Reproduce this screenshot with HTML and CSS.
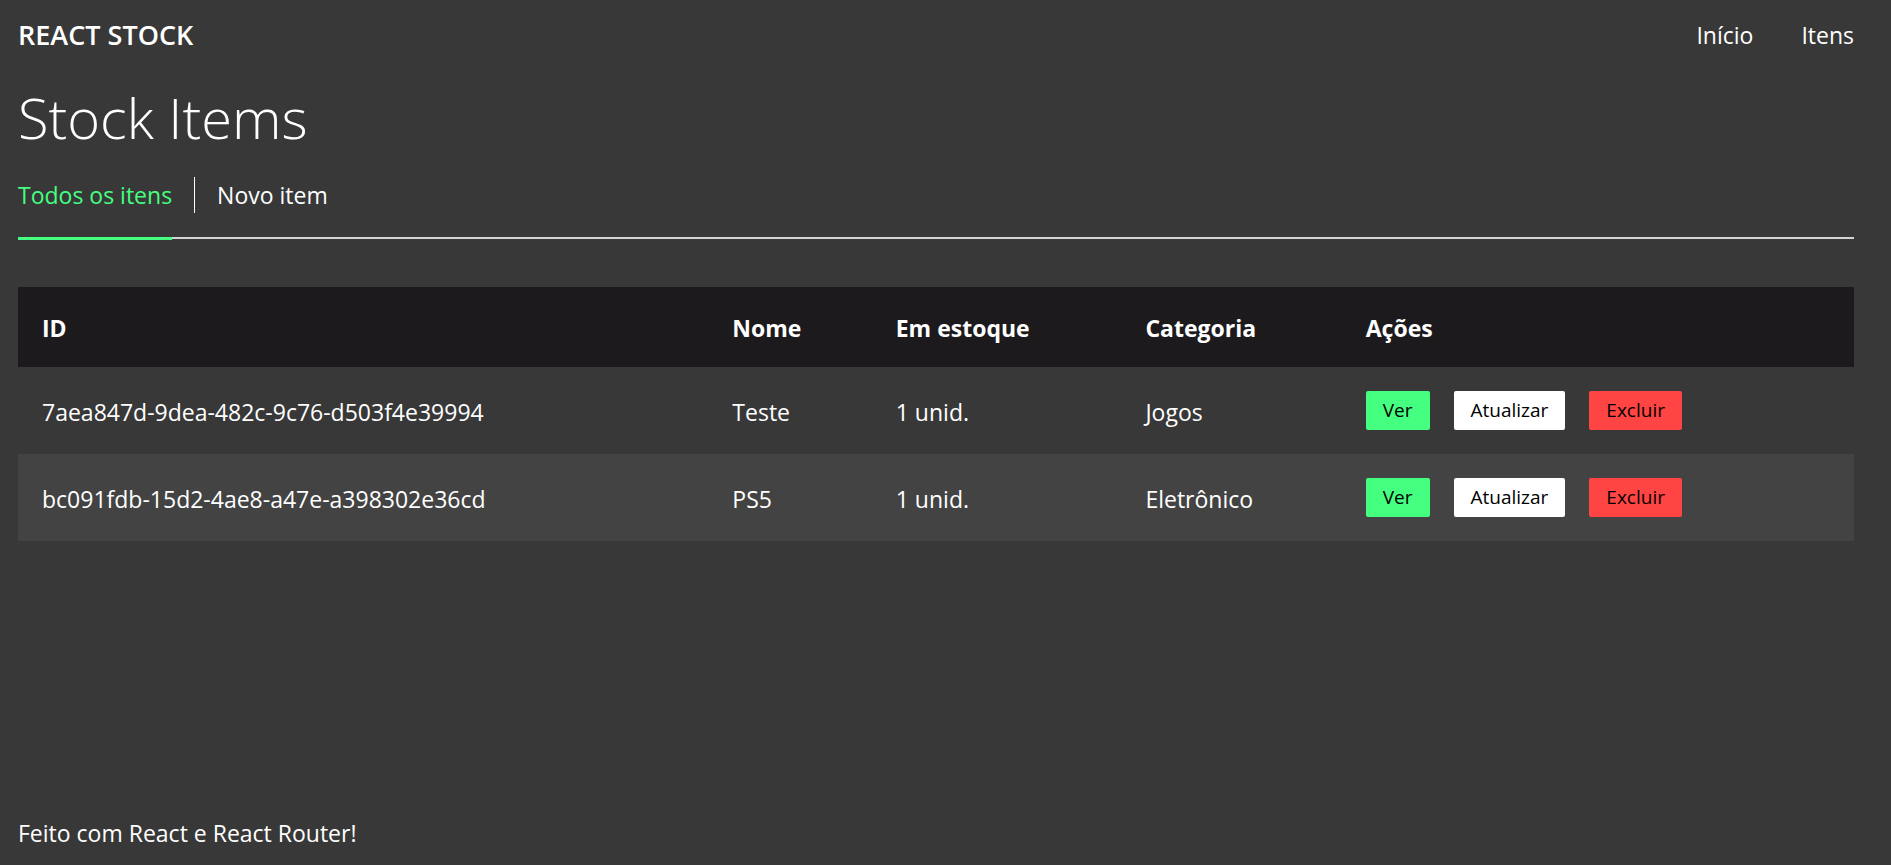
FILE: index.html
```html
<!DOCTYPE html>
<html lang="pt-BR">
<head>
  <meta charset="utf-8">
  <meta name="viewport" content="width=device-width, initial-scale=1">
  <title>React Stock</title>
  <link rel="stylesheet" href="styles.css">
</head>
<body>
  <header class="site-header">
    <a class="logo" href="#">REACT STOCK</a>
    <nav class="site-nav">
      <a href="#">Início</a>
      <a href="#">Itens</a>
    </nav>
  </header>
  <main class="content">
    <h1 class="title">Stock Items</h1>
    <nav class="tabs">
      <a class="tab active" href="#">Todos os itens</a>
      <span class="divider"></span>
      <a class="tab" href="#">Novo item</a>
    </nav>
    <table class="items">
      <colgroup>
        <col class="col-id"><col class="col-name"><col class="col-stock"><col class="col-category"><col class="col-actions">
      </colgroup>
      <thead>
        <tr><th>ID</th><th>Nome</th><th>Em estoque</th><th>Categoria</th><th>Ações</th></tr>
      </thead>
      <tbody>
        <tr>
          <td>7aea847d-9dea-482c-9c76-d503f4e39994</td>
          <td>Teste</td>
          <td>1 unid.</td>
          <td>Jogos</td>
          <td class="actions-cell">
            <div class="actions">
              <button class="button view" type="button">Ver</button>
              <button class="button" type="button">Atualizar</button>
              <button class="button delete" type="button">Excluir</button>
            </div>
          </td>
        </tr>
        <tr>
          <td>bc091fdb-15d2-4ae8-a47e-a398302e36cd</td>
          <td>PS5</td>
          <td>1 unid.</td>
          <td>Eletrônico</td>
          <td class="actions-cell">
            <div class="actions">
              <button class="button view" type="button">Ver</button>
              <button class="button" type="button">Atualizar</button>
              <button class="button delete" type="button">Excluir</button>
            </div>
          </td>
        </tr>
      </tbody>
    </table>
  </main>
  <footer class="site-footer">Feito com React e React Router!</footer>
</body>
</html>
```
FILE: styles.css
```css
* {
  box-sizing: border-box;
}

body {
  margin: 0;
  min-height: 100vh;
  padding: 0 37px 0 18px;
  display: flex;
  flex-direction: column;
  background: #383838;
  color: #fff;
  font-family: "Open Sans", "Noto Sans", sans-serif;
  font-size: 23px;
  line-height: 36px;
}

a {
  color: inherit;
  text-decoration: none;
}

.site-header {
  display: flex;
  align-items: center;
  justify-content: space-between;
  height: 70px;
}

.logo {
  font-size: 27px;
  font-weight: 600;
}

.site-nav {
  display: flex;
  gap: 48px;
}

.content {
  flex: 1;
}

.title {
  margin: 0 0 13px;
  font-size: 56px;
  font-weight: 300;
  line-height: 94px;
}

.tabs {
  display: flex;
  align-items: flex-start;
  gap: 22px;
  height: 62px;
  margin-bottom: 48px;
  border-bottom: 2px solid #d4d4d4;
}

.tab.active {
  height: 63px;
  border-bottom: 3px solid #44ff80;
  color: #44ff80;
}

.divider {
  width: 1px;
  height: 36px;
  background: #fff;
}

.items {
  width: 100%;
  border-collapse: collapse;
  table-layout: fixed;
}

.col-id { width: 37.6%; }
.col-name { width: 8.9%; }
.col-stock { width: 13.6%; }
.col-category { width: 12%; }
.col-actions { width: 27.9%; }

.items th,
.items td {
  padding: 26px 24px 22px;
  text-align: left;
}

.items th {
  padding: 23px 24px 21px;
  background: #1d1a1d;
  font-weight: 700;
}

.items td {
  line-height: 39px;
}

.items .actions-cell {
  padding: 24px;
}

.items tbody tr:nth-child(even) {
  background: #434343;
}

.actions {
  display: flex;
  gap: 24px;
}

.button {
  height: 39px;
  padding: 0 17px;
  border: 0;
  border-radius: 2px;
  background: #fff;
  color: #000;
  font: inherit;
  font-size: 19px;
}

.button.view { background: #44ff80; }
.button.delete { background: #ff4444; }

.site-footer {
  padding: 14px 0;
}
```
